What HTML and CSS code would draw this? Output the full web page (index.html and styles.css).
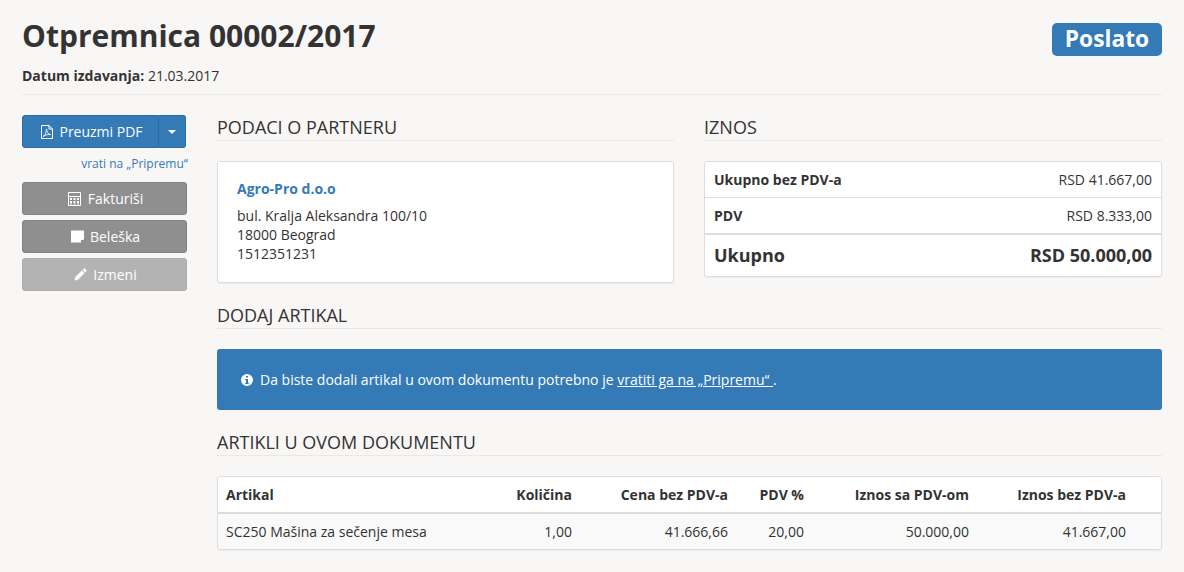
FILE: index.html
```html
<!DOCTYPE html>
<html lang="sr">
<head>
<meta charset="utf-8">
<title>Otpremnica 00002/2017</title>
<link rel="stylesheet" href="styles.css">
</head>
<body>
<header class="page-head">
  <div class="head-top">
    <h1>Otpremnica 00002/2017</h1>
    <span class="status">Poslato</span>
  </div>
  <p class="date"><b>Datum izdavanja:</b> 21.03.2017</p>
</header>
<div class="layout">
  <aside class="side">
    <div class="split">
      <a class="btn-main">
        <svg class="ico" viewBox="0 0 12 14" width="12" height="14"><path d="M.5.500h7.500l3.500 3.500v9.500H.500z M8 .500v3.500h3.500" fill="none" stroke="#fff" stroke-width="1"/><path d="M2 11.500c2-1 3.500-4 3.200-6.500-.3-1 .8-1 .7 0-.1 2.500 1.800 4.500 3.800 4.500-2.200-.4-5.300.5-7.700 2z" fill="none" stroke="#fff" stroke-width=".8"/></svg>
        Preuzmi PDF
      </a>
      <a class="btn-caret"><span class="caret"></span></a>
    </div>
    <a class="back">vrati na „Pripremu“</a>
    <a class="btn">
      <svg class="ico" viewBox="0 0 14 14" width="14" height="14"><path d="M.5.500h12v13H.500z M.5 4.500h12" fill="none" stroke="#fff" stroke-width="1"/><path d="M2 6h2v2H2z M5.500 6h2v2h-2z M9 6h2v2H9z M2 9h2v2H2z M5.500 9h2v2h-2z M9 9h2v2H9z M2 11.500h2v1H2z M5.500 11.500h2v1h-2z M9 11.500h2v1H9z" fill="#fff"/></svg>
      Fakturiši
    </a>
    <a class="btn">
      <svg class="ico" viewBox="0 0 13 13" width="13" height="13"><path d="M0 .500h13v8l-4 4H0z" fill="#fff"/><path d="M9.500 9.500H13l-3.500 3.500z" fill="#8f8f8f"/><path d="M9 9h3.500v1H10v2.500H9z" fill="#fff"/></svg>
      Beleška
    </a>
    <a class="btn btn-off">
      <svg class="ico" viewBox="0 0 13 13" width="13" height="13"><path d="M.5 12.500l.8-3.500 6.600-6.600 2.700 2.700-6.600 6.600z" fill="#fff"/><path d="M8.600 1.700l.9-.9a1.200 1.200 0 0 1 1.600 0l1.100 1.100a1.200 1.200 0 0 1 0 1.600l-.9.900z" fill="#fff"/></svg>
      Izmeni
    </a>
  </aside>
  <main class="main">
    <div class="cols">
      <section class="col col-left">
        <h2>PODACI O PARTNERU</h2>
        <div class="card partner">
          <a class="partner-name">Agro-Pro d.o.o</a>
          <p>bul. Kralja Aleksandra 100/10<br>18000 Beograd<br>1512351231</p>
        </div>
      </section>
      <section class="col">
        <h2>IZNOS</h2>
        <div class="card totals">
          <div class="t-row"><b>Ukupno bez PDV-a</b><span>RSD 41.667,00</span></div>
          <div class="t-row"><b>PDV</b><span>RSD 8.333,00</span></div>
          <div class="t-row t-sum"><b>Ukupno</b><b>RSD 50.000,00</b></div>
        </div>
      </section>
    </div>
    <h2 class="sec-add">DODAJ ARTIKAL</h2>
    <div class="alert">
      <svg class="ico-i" viewBox="0 0 12 12" width="12" height="12"><path fill-rule="evenodd" fill="#fff" d="M6 0a6 6 0 1 1 0 12A6 6 0 0 1 6 0zM5 1.900v1.700h2V1.900zM4.300 5v1.200H5v2.500h-.7v1.200h3.400V8.700H7V5z"/></svg>
      <span>Da biste dodali artikal u ovom dokumentu potrebno je <a>vratiti ga na „Pripremu“ </a>.</span>
    </div>
    <h2 class="sec-items">ARTIKLI U OVOM DOKUMENTU</h2>
    <div class="card items">
      <table>
        <thead>
          <tr><th class="c-name">Artikal</th><th class="c-qty">Količina</th><th class="c-price">Cena bez PDV-a</th><th class="c-vat">PDV %</th><th class="c-gross">Iznos sa PDV-om</th><th class="c-net">Iznos bez PDV-a</th><th class="c-end"></th></tr>
        </thead>
        <tbody>
          <tr><td class="c-name">SC250 Mašina za sečenje mesa</td><td class="c-qty">1,00</td><td class="c-price">41.666,66</td><td class="c-vat">20,00</td><td class="c-gross">50.000,00</td><td class="c-net">41.667,00</td><td class="c-end"></td></tr>
        </tbody>
      </table>
    </div>
  </main>
</div>
</body>
</html>
```
FILE: styles.css
```css
* { box-sizing: border-box; }
html, body { height: 100%; }
body {
  margin: 0;
  padding: 0 22px;
  background: #f8f7f6;
  color: #333;
  font: 14px/19px "Open Sans", sans-serif;
  overflow: hidden;
}
.page-head {
  height: 95px;
  border-bottom: 1px solid #ebebeb;
  padding-top: 15px;
}
.head-top { display: flex; justify-content: space-between; align-items: flex-start; }
h1 { margin: 0; font-size: 30px; line-height: 41px; font-weight: 700; }
.status {
  margin-top: 8px;
  width: 110px;
  height: 33px;
  background: #337ab7;
  color: #fff;
  border-radius: 5px;
  font-size: 22.750px;
  line-height: 31px;
  font-weight: 700;
  text-align: center;
}
.date { margin: 10px 0 0; }
.layout { display: flex; padding-top: 20px; gap: 30px; }
.side { width: 165px; flex: none; display: flex; flex-direction: column; }
.split { display: flex; width: 164px; height: 33px; color: #fff; }
.btn-main {
  flex: 1;
  background: #337ab7;
  border: 1px solid #2e6da4;
  border-radius: 3px 0 0 3px;
  padding-left: 3px;
  display: flex; align-items: center; justify-content: center; gap: 6px;
}
.btn-caret {
  width: 27px;
  background: #337ab7;
  border: 1px solid #2e6da4;
  border-left-width: 0;
  border-radius: 0 3px 3px 0;
  display: flex; align-items: center; justify-content: center;
}
.caret { border: 4px solid transparent; border-top-color: #fff; border-bottom-width: 0; }
.back {
  color: #337ab7;
  font-size: 12px;
  line-height: 16px;
  text-align: right;
  margin: 8px -1px 10px 0;
}
.btn {
  height: 33px;
  margin-bottom: 5px;
  padding-left: 2px;
  background: #8f8f8f;
  border: 1px solid #828282;
  border-radius: 3px;
  color: #fff;
  display: flex; align-items: center; justify-content: center; gap: 6px;
}
.btn-off { background: #b3b3b3; border-color: #acacac; }
.ico { flex: none; }
.main { flex: 1; min-width: 0; }
.cols { display: flex; gap: 30px; }
.col { flex: 1; min-width: 0; }
.col-left { flex: none; width: 457px; }
h2 {
  margin: 0 0 20px;
  height: 26px;
  border-bottom: 1px solid #e8e8e8;
  font-size: 18px;
  line-height: 25px;
  font-weight: 400;
}
.card {
  background: #fff;
  border: 1px solid #ddd;
  border-radius: 3px;
  box-shadow: 0 1px 1px rgba(0,0,0,.05);
}
.partner { height: 122px; padding: 17px 19px; }
.partner-name { display: block; color: #337ab7; font-weight: 700; margin-bottom: 8px; }
.partner p { margin: 0; }
.t-row {
  display: flex; justify-content: space-between; align-items: center;
  height: 36px;
  padding: 0 9px;
  border-bottom: 1px solid #ddd;
  font-size: 14px;
}
.t-row:nth-child(2) { border-bottom-width: 2px; height: 37px; }
.t-sum { height: 41px; border-bottom: 0; font-size: 18px; }
.sec-add { margin-top: 20px; }
.alert {
  height: 61px;
  background: #337ab7;
  border-radius: 3px;
  color: #fff;
  display: flex; align-items: center; gap: 7px;
  padding: 0 24px;
}
.alert a { text-decoration: underline; }
.sec-items { margin-top: 20px; }
.items { height: 74px; overflow: hidden; }
table { width: 100%; border-collapse: collapse; table-layout: fixed; }
th, td { padding: 0; text-align: right; font-size: 14px; }
th { height: 36px; border-bottom: 2px solid #ddd; background: #fff; }
td { height: 37px; padding-bottom: 2px; background: #f9f9f9; }
td.c-name { padding-left: 8px; }
.c-name { text-align: left; padding-left: 8px; width: 260px; }
.c-qty { width: 94px; }
.c-price { width: 156px; }
.c-vat { width: 76px; }
.c-gross { width: 165px; }
.c-net { width: 157px; }
```
